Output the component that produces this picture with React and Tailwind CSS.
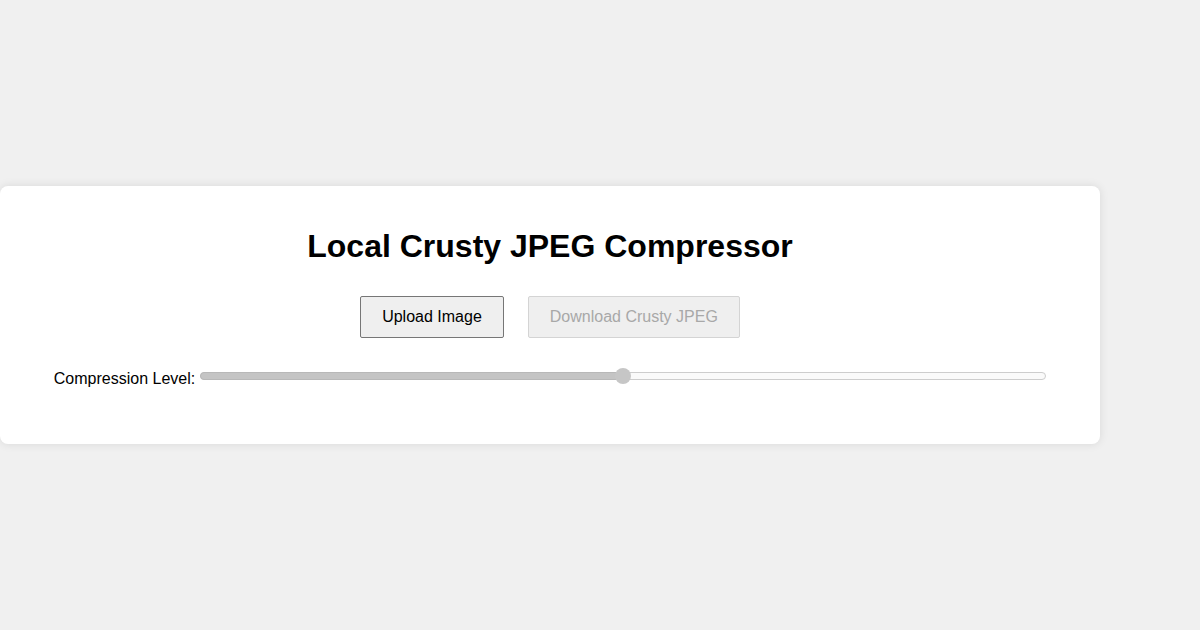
export default function App() {
  return (
    <div className="w-[1200px] h-[630px] bg-[#f0f0f0] flex items-center" style={{ fontFamily: '"Liberation Sans", Arial, sans-serif' }}>
      <div className="w-[1100px] h-[258px] bg-white rounded-lg shadow-[0_0_10px_rgba(0,0,0,0.1)] flex flex-col items-center pt-[42px]">
        <h1 className="text-[32px] leading-[37px] font-bold text-black">Local Crusty JPEG Compressor</h1>
        <div className="flex gap-[24px] mt-[31px]">
          <button className="h-[42px] px-[21px] text-[16px] text-black bg-[#efefef] border border-[#767676] rounded-[2px]">Upload Image</button>
          <button disabled className="h-[42px] px-[21px] text-[16px] text-[#a8a8a8] bg-[#efefef] border border-[#d4d4d4] rounded-[2px]">Download Crusty JPEG</button>
        </div>
        <div className="flex items-center mt-[30px] h-[20px]">
          <span className="text-[16px] text-black mr-[5px] mt-[2px]">Compression Level:</span>
          <div className="relative w-[846px] h-[8px] mb-[4px]">
            <div className="absolute inset-0 rounded-full border border-[#cdcdcd] bg-[#fafafa]" />
            <div className="absolute left-0 top-0 h-[8px] w-[424px] rounded-l-full bg-[#c4c4c4] border border-[#b8b8b8]" />
            <div className="absolute left-[415px] top-[-4px] w-[16px] h-[16px] rounded-full bg-[#c6c6c6]" />
          </div>
        </div>
      </div>
    </div>
  );
}
